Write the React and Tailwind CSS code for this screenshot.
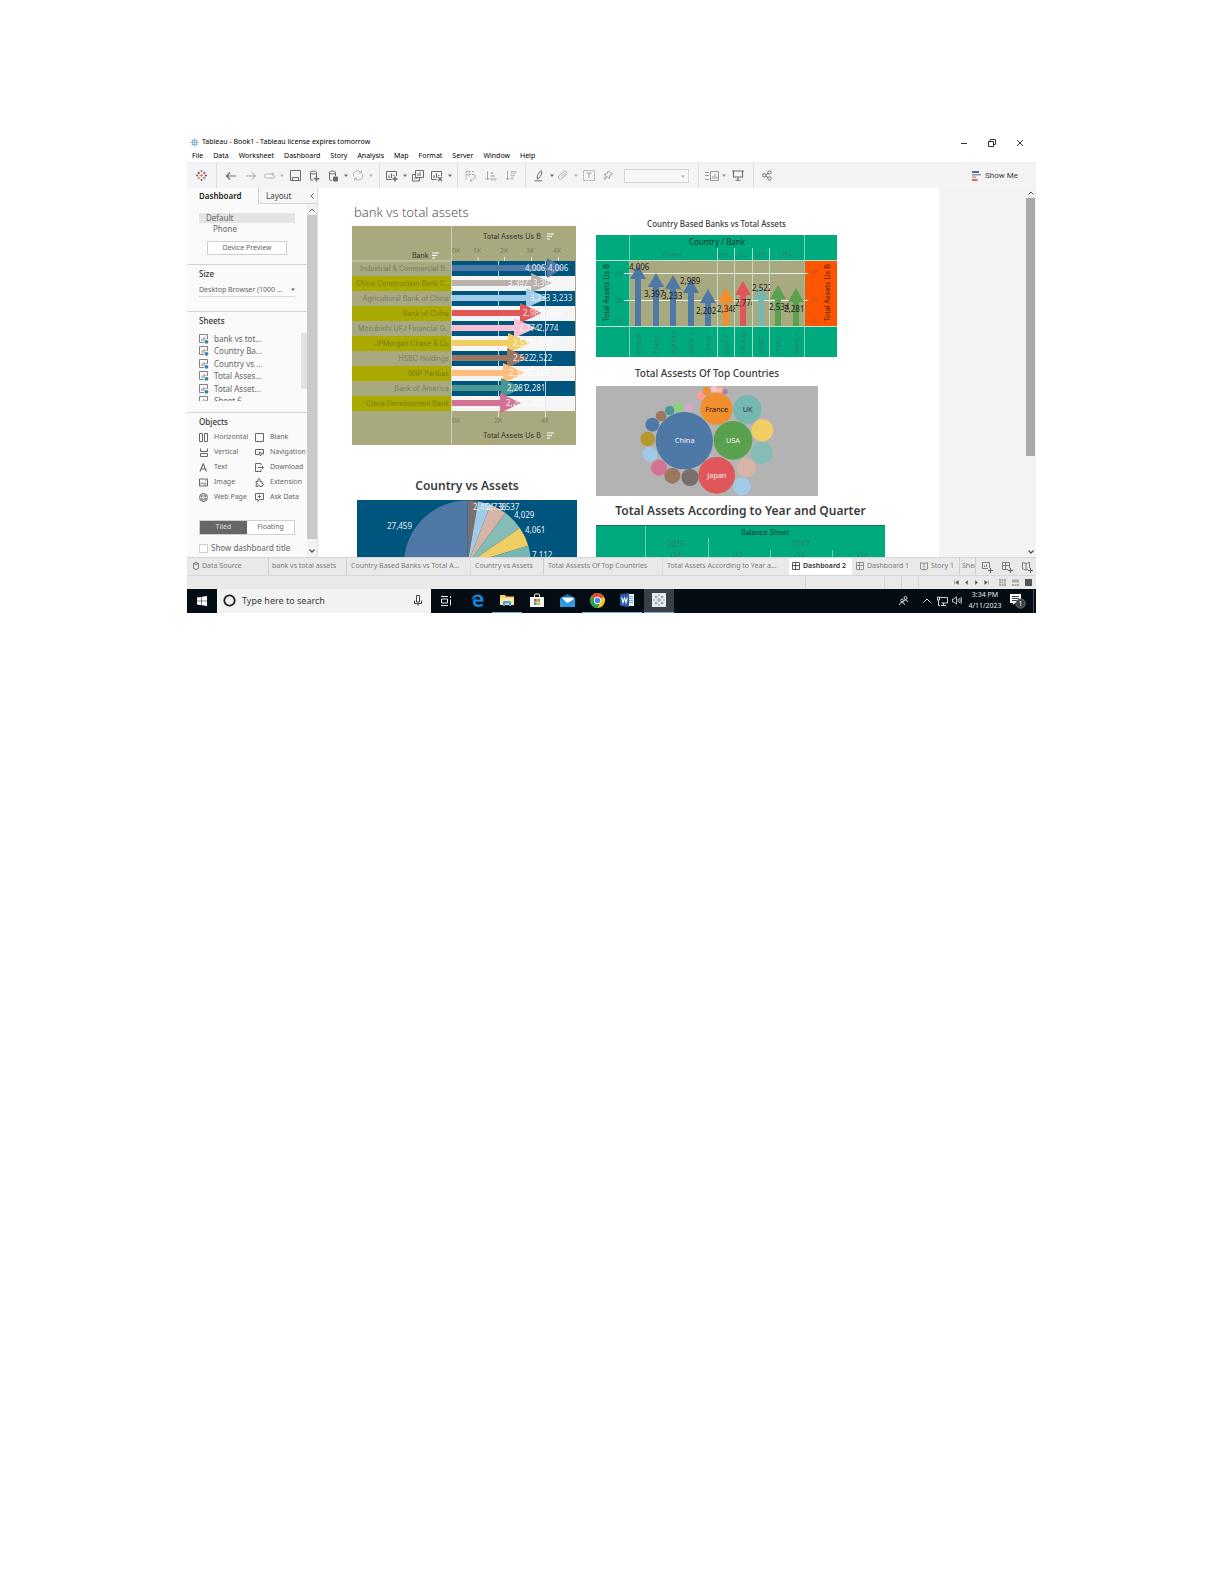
import React from "react";

const OLIVE = "#a9a97f";

function Svg({ w, h, children, className = "", ...rest }) {
  return (
    <svg width={w} height={h} viewBox={`0 0 ${w} ${h}`} fill="none" stroke="currentColor" className={`shrink-0 ${className}`} aria-hidden="true" {...rest}>
      {children}
    </svg>
  );
}

/* ---------- shared glyphs ---------- */
function TableauMark({ size = 10 }) {
  const c = ["#e8762c", "#c72037", "#5b6591", "#59879b"];
  return (
    <svg width={size} height={size} viewBox="0 0 20 20" fill="none" className="shrink-0" aria-hidden="true" strokeWidth="1.6">
      <path d="M10 7v6M7 10h6" stroke={c[0]} />
      <path d="M5 3v5M2.500 5.500h5" stroke={c[1]} />
      <path d="M15 3v5M12.500 5.500h5" stroke={c[2]} />
      <path d="M5 12v5M2.500 14.500h5" stroke={c[0]} />
      <path d="M15 12v5M12.500 14.500h5" stroke={c[3]} />
      <path d="M10 0v4M8 2h4" stroke={c[3]} />
      <path d="M10 16v4M8 18h4" stroke={c[2]} />
      <path d="M2 8v4M0 10h4" stroke={c[2]} />
      <path d="M18 8v4M16 10h4" stroke={c[1]} />
    </svg>
  );
}
const Back = () => <Svg w={12} h={10} strokeWidth="1.2"><path d="M11 5H1.500M5 1.500L1.500 5L5 8.500" /></Svg>;
const Forward = () => <Svg w={12} h={10}><path d="M1 5h9.500M7 1.500L10.500 5L7 8.500" /></Svg>;
const Replay = () => <Svg w={12} h={10}><path d="M8 7H2.500Q.5 7 .5 5T2.500 3H9.500M8 1.500L10 3L8 4.500M10 4.500Q11.500 5 10.500 6.500L8 7" /></Svg>;
const Save = () => <Svg w={11} h={11}><path d="M.5.5h10v10H.5zM2.500 10.500V7.500h6v3" /></Svg>;
const Cylinder = ({ pause }) => (
  <Svg w={12} h={12}>
    <path d="M4 10.500Q1.500 10.500 1.500 9V2.500Q1.500 1 4.500 1T7.500 2.500V6M1.500 2.500Q1.500 4 4.500 4T7.500 2.500" />
    {pause ? <path d="M5.500 7h4v4h-4z" fill="currentColor" /> : <path d="M7.500 6v5.500M4.700 8.700h5.600" strokeWidth="1.4" />}
  </Svg>
);
const Refresh = () => <Svg w={12} h={11}><path d="M1.500 6.500A4.300 4.300 0 0 1 9 2.500M10.500 4.500A4.300 4.300 0 0 1 3 8.500M9.500.5V3H7M2.500 10.500V8H5" /></Svg>;
const SheetIcon = ({ mark }) => (
  <Svg w={12} h={12}>
    <path d="M5.500 9.500H.5v-8h10V6" />
    <path d="M3 8V5.500M5.500 8V3.500M7.800 6V5" strokeWidth="1.200" />
    {mark === "plus" ? <path d="M9 6.500v5M6.500 9h5" strokeWidth="1.500" /> : <path d="M7 7l4 4M11 7l-4 4" strokeWidth="1.300" />}
  </Svg>
);
const Duplicate = () => <Svg w={12} h={12}><path d="M3.500.5h8v7h-8zM7.500 7.500v3.500h-7v-6.500h3M6 6V3.500M8 6V2M3 9V7.500M5 9V7.500" /></Svg>;
const Swap = () => <Svg w={12} h={12}><path d="M1 1.500h9M1 1.500v8M1 4.500h9M4 1.500v5M10 4.500v3M5 10.500Q10 10.500 10 7M8.500 8L10 6.500L11.500 8M6.500 9L5 10.500L6.500 12" strokeDasharray="2 1" /></Svg>;
const SortIcon = ({ up }) => (
  <Svg w={12} h={10}>
    <path d="M2.500 0v9M.5 7l2 2l2-2" />
    {up ? <path d="M6 1.500h2v1H6zM6 4.500h3.500v1H6zM6 7.500h5v1.500H6z" strokeWidth=".7" /> : <path d="M6 .5h5v1.500H6zM6 4h3.500v1H6zM6 7h2v1H6z" strokeWidth=".7" />}
  </Svg>
);
const Pen = () => <Svg w={12} h={12}><path d="M3 8.500L3.500 5.500Q5.500 1 7 .8T7.500 4Q6.500 7 5 8.200z" /><path d="M.5 10.800h7.500" strokeWidth="1" /></Svg>;
const Clip = () => <Svg w={12} h={11}><path d="M2 8.500Q.5 7 2 5.500L6.500 1.500Q8.500.5 9.500 2T8.500 5L4.500 9Q3 9.500 2 8.500M4 6.500L7.500 3.500M5 8L9 4" /></Svg>;
const TextBox = () => <Svg w={12} h={11}><path d="M.5.5h11v10H.5z" strokeDasharray="2 1" /><path d="M3.500 3h5M6 3v5" /></Svg>;
const Pin = () => <Svg w={12} h={11}><path d="M6 .8L10.500 4L8 5L7.500 8.500L5.500 6.800L2 9.800L4.200 6L2 4.500L5.500 3.500z" /></Svg>;
const Fit = () => <Svg w={14} h={10}><path d="M0 1.500h4M0 4.500h4M0 8.500h4M5.500.5h8v9h-8zM8 8V5M10 8V3M12 8V5.500" /></Svg>;
const Present = () => <Svg w={12} h={11}><path d="M0 1h12M1.500 1v6h9V1M6 7v3M3.500 10.300h5" strokeWidth="1.100" /></Svg>;
const Share = () => <Svg w={10} h={11}><circle cx="2.300" cy="5.300" r="1.700" /><circle cx="7.500" cy="2.500" r="1.700" /><circle cx="7.500" cy="8.500" r="1.700" /><path d="M4 4.500l2-1M4 6.300l2 1.300" /></Svg>;
const Caret = () => <svg width="4" height="3" viewBox="0 0 4 3" fill="currentColor" className="shrink-0" aria-hidden="true"><path d="M0 .5h4L2 3z" /></svg>;
const Grid = () => <Svg w={8} h={8} strokeWidth=".8"><path d="M.5.5h7v7h-7zM.5 3.500h7M3.500.5v7" /></Svg>;
const Book = () => <Svg w={8} h={9} strokeWidth=".8"><path d="M4 1.500L.5.500V7L4 8L7.500 7V.500L4 1.500V8" /></Svg>;

/* ---------- title, menu, toolbar ---------- */
const menus = ["File", "Data", "Worksheet", "Dashboard", "Story", "Analysis", "Map", "Format", "Server", "Window", "Help"];

function TitleBar() {
  return (
    <header className="bg-white text-[7px] text-black">
      <div className="flex h-[13px] items-center pl-[3px] font-['Noto_Sans',sans-serif]">
        <svg width="9" height="9" viewBox="0 0 9 9" fill="none" stroke="#5b9bb8" className="mr-[3px] shrink-0" aria-hidden="true">
          <path d="M4.500 0v9M0 4.500h9M2.500 1.500v6M6.500 1.500v6M1.500 2.500h6M1.500 6.500h6" strokeWidth=".6" />
        </svg>
        <h1 className="whitespace-nowrap">Tableau - Book1 - Tableau license expires tomorrow</h1>
        <div className="ml-auto flex pr-[2px]">
          <button aria-label="Minimize" className="flex h-[13px] w-7 items-center justify-center"><Svg w={8} h={8}><path d="M1 4.500h6" strokeWidth=".8" /></Svg></button>
          <button aria-label="Restore" className="flex h-[13px] w-7 items-center justify-center"><Svg w={8} h={8} strokeWidth=".8"><path d="M.5 2.500h5v5h-5zM2 2.500V1q0-.5.5-.5H7q.5 0 .5.5v4q0 .5-.5.5H5.500" /></Svg></button>
          <button aria-label="Close" className="flex h-[13px] w-7 items-center justify-center"><Svg w={8} h={8} strokeWidth=".8"><path d="M1 1l6 6M7 1L1 7" /></Svg></button>
        </div>
      </div>
      <nav className="flex h-[13px] items-center gap-[10px] pl-[5px] pt-px font-['Noto_Sans',sans-serif]">
        {menus.map((m) => <button key={m} className="leading-[10px]">{m}</button>)}
      </nav>
    </header>
  );
}

const Rule = ({ className = "" }) => <span className={`w-px self-stretch bg-[#dcdcdc] ${className}`} />;
function Tool({ label, className = "", children }) {
  return <button aria-label={label} title={label} className={`flex h-5 shrink-0 items-center justify-center ${className}`}>{children}</button>;
}

function Toolbar() {
  return (
    <div className="flex h-[26px] items-center border-t border-[#ebebeb] bg-[#f4f4f4] text-[#6a6a6a]">
      <Tool label="Start page" className="w-[29px]"><TableauMark size={11} /></Tool>
      <Rule className="mr-1" />
      <Tool label="Undo" className="w-5"><Back /></Tool>
      <Tool label="Redo" className="w-5 text-[#a5a5a5]"><Forward /></Tool>
      <Tool label="Replay" className="w-[18px] text-[#b5b5b5]"><Replay /></Tool>
      <Tool label="Replay options" className="w-[6px] text-[#b5b5b5]"><Caret /></Tool>
      <Tool label="Save" className="w-5"><Save /></Tool>
      <Tool label="New data source" className="w-5"><Cylinder /></Tool>
      <Tool label="Pause updates" className="w-[18px]"><Cylinder pause /></Tool>
      <Tool label="Pause options" className="w-[6px]"><Caret /></Tool>
      <Tool label="Run update" className="w-[18px] text-[#b5b5b5]"><Refresh /></Tool>
      <Tool label="Update options" className="mr-1 w-2 text-[#b5b5b5]"><Caret /></Tool>
      <Rule className="mr-[2px]" />
      <Tool label="New worksheet" className="w-5"><SheetIcon mark="plus" /></Tool>
      <Tool label="New options" className="w-[6px]"><Caret /></Tool>
      <Tool label="Duplicate" className="w-5"><Duplicate /></Tool>
      <Tool label="Clear sheet" className="w-[18px]"><SheetIcon mark="x" /></Tool>
      <Tool label="Clear options" className="mr-1 w-[7px]"><Caret /></Tool>
      <Rule className="mr-[3px]" />
      <Tool label="Swap" className="w-5 text-[#acacac]"><Swap /></Tool>
      <Tool label="Sort ascending" className="w-5 text-[#acacac]"><SortIcon up /></Tool>
      <Tool label="Sort descending" className="mr-1 w-5 text-[#acacac]"><SortIcon /></Tool>
      <Rule className="mr-[5px]" />
      <Tool label="Highlight" className="w-[18px]"><Pen /></Tool>
      <Tool label="Highlight options" className="w-[5px]"><Caret /></Tool>
      <Tool label="Group" className="w-[18px] text-[#b5b5b5]"><Clip /></Tool>
      <Tool label="Group options" className="w-[7px] text-[#b5b5b5]"><Caret /></Tool>
      <Tool label="Labels" className="w-5 text-[#a5a5a5]"><TextBox /></Tool>
      <Tool label="Pin" className="w-[18px] text-[#a5a5a5]"><Pin /></Tool>
      <div className="relative ml-[7px] mr-[9px] h-[14px] w-[65px]">
        <select aria-label="Fit size" className="h-full w-full appearance-none border border-[#d4d4d4] bg-[#f7f7f7]" />
        <span className="pointer-events-none absolute right-1 top-[6px] text-[#b5b5b5]"><Caret /></span>
      </div>
      <Rule className="mr-1" />
      <Tool label="Show cards" className="w-[18px] text-[#9a9a9a]"><Fit /></Tool>
      <Tool label="Card options" className="w-[6px] text-[#9a9a9a]"><Caret /></Tool>
      <Tool label="Presentation mode" className="mr-1 w-[22px]"><Present /></Tool>
      <Rule className="mr-1" />
      <Tool label="Share" className="w-[18px]"><Share /></Tool>
      <button className="ml-auto mr-[18px] flex items-center gap-1 font-['Roboto',sans-serif] text-[8px] text-[#3c3c3c]">
        <svg width="9" height="10" viewBox="0 0 9 10" aria-hidden="true">
          <path d="M0 0h7v2H0z" fill="#5b6591" /><path d="M0 3h9v1.500H0z" fill="#8596b8" /><path d="M0 5.500h4v1.500H0z" fill="#b99a9a" /><path d="M0 8h5.500v2H0z" fill="#e0605f" />
        </svg>
        Show Me
      </button>
    </div>
  );
}

/* ---------- sidebar ---------- */
const sheets = ["bank vs tot...", "Country Ba...", "Country vs ...", "Total Asses...", "Total Asset...", "Sheet 6"];
const objects = [
  ["Horizontal", <Svg w={9} h={9} key="i"><path d="M.5.500h3v8h-3zM5.500.500h3v8h-3z" /></Svg>],
  ["Blank", <Svg w={9} h={9} key="i"><path d="M.5.500h8v8h-8z" /></Svg>],
  ["Vertical", <Svg w={9} h={9} key="i"><path d="M1.500.500v3h7v-3M1.500 8.500v-3h7v3z" /></Svg>],
  ["Navigation", <Svg w={9} h={9} key="i"><path d="M4 6.500H.5v-5h8v5M4 4l3.500 1.500L6 6.500L5.500 8z" /></Svg>],
  ["Text", <Svg w={9} h={9} key="i"><path d="M1 8.500L4.200.800L7.500 8.500M2.300 6h4" strokeWidth="1.100" /></Svg>],
  ["Download", <Svg w={9} h={9} key="i"><path d="M6 2.500V.500H.5v8H6v-2M3 4.500h5.500M7 3l1.500 1.500L7 6" /></Svg>],
  ["Image", <Svg w={9} h={9} key="i"><path d="M.5 1h8v7h-8zM1 6.500l2-2l1.500 1.500h3M6 3h1" /></Svg>],
  ["Extension", <Svg w={9} h={9} key="i"><path d="M1 3.500h2Q2.500.500 4 .500T5 3.500h2v2q1.500 0 1.500 1T7 7.500v1H5Q5 7 4 7T3 8.500H1v-2q1.500 0 1.500-.8T1 5z" /></Svg>],
  ["Web Page", <Svg w={9} h={9} key="i" strokeWidth=".8"><circle cx="4.500" cy="4.500" r="4" /><ellipse cx="4.500" cy="4.500" rx="1.800" ry="4" /><path d="M.5 3h8M.5 6h8" /></Svg>],
  ["Ask Data", <Svg w={9} h={9} key="i"><path d="M.5.500h8v6H4.500L3 8.500V6.500H.5zM4.500 1.800v3.200M3 3.500h3" /></Svg>],
];

function Sidebar() {
  return (
    <aside className="flex w-[131px] shrink-0 flex-col border-r border-[#dedede] bg-[#fafafa] font-['Noto_Sans',sans-serif] text-[8px] leading-[10px] text-[#666]">
      <div className="flex h-4 items-stretch">
        <button className="w-[71px] pl-3 text-left font-semibold text-[#222]">Dashboard</button>
        <button className="w-[49px] border-b border-l border-[#d4d4d4] bg-[#f6f6f6] pl-[7px] text-left text-[#444]">Layout</button>
        <button aria-label="Collapse" className="flex flex-1 items-center justify-center border-b border-[#d4d4d4] bg-[#f6f6f6]"><Svg w={4} h={6}><path d="M3.500.500L1 3l2.500 2.500" /></Svg></button>
      </div>
      <div className="flex flex-1">
        <div className="flex-1">
          <section className="border-b border-[#d4d4d4] pb-[9px] pl-3 pr-3 pt-[9px]">
            <button className="block w-full bg-[#e4e4e4] pl-[7px] text-left">Default</button>
            <button className="mt-px block pl-[14px]">Phone</button>
            <button className="ml-2 mt-[7px] block h-[14px] w-20 border border-[#cfcfcf] bg-white text-[7px]">Device Preview</button>
          </section>
          <section className="border-b border-[#d4d4d4] pb-[14px] pl-3 pr-3 pt-1">
            <h2 className="font-medium text-[#333]"><label htmlFor="size">Size</label></h2>
            <div className="relative mt-[5px]">
              <select id="size" className="h-3 w-full appearance-none border-b border-[#dcdcdc] bg-transparent text-[7px] leading-[10px]">
                <option>Desktop Browser (1000 ...</option>
              </select>
              <span className="pointer-events-none absolute right-0 top-1"><Caret /></span>
            </div>
          </section>
          <section className="border-b border-[#d4d4d4] pb-[11px] pl-3 pt-1">
            <h2 className="font-medium text-[#333]">Sheets</h2>
            <div className="mt-[7px] flex h-[68px] justify-between overflow-hidden">
              <ul className="grid h-[75px] grid-rows-6">
                {sheets.map((s) => (
                  <li key={s} className="flex items-center gap-[5px]">
                    <Svg w={10} h={10}><path d="M5 8.500H.5v-8h8V5M3 7V4.500M5 7V3M6.800 5V4" strokeWidth=".8" /><circle cx="7.500" cy="7.800" r="1.900" fill="#3c7fa6" stroke="none" /></Svg>
                    {s}
                  </li>
                ))}
              </ul>
              <span className="h-14 w-[6px] bg-[#e2e2e2]" />
            </div>
          </section>
          <section className="pl-3 pt-1">
            <h2 className="font-medium text-[#333]">Objects</h2>
            <div className="mt-[3px] grid grid-cols-[56px_1fr]">
              {objects.map(([name, icon]) => (
                <button key={name} className="flex h-[15px] items-center gap-[6px] text-[7px]">{icon}{name}</button>
              ))}
            </div>
            <div className="mr-3 mt-[15px] flex h-[15px] border border-[#cfcfcf] text-[7px]">
              <button className="flex-1 bg-[#666] text-[#ddd]">Tiled</button>
              <button className="flex-1 bg-white">Floating</button>
            </div>
            <label className="mb-[3px] mt-2 flex h-[11px] items-center gap-[3px] whitespace-nowrap">
              <input type="checkbox" className="h-[9px] w-[9px] appearance-none border border-[#cfcfcf] bg-white" />
              Show dashboard title
            </label>
          </section>
        </div>
        <div className="flex w-[10px] flex-col items-center bg-[#f2f2f2] text-[#555]">
          <span className="flex h-[11px] items-center"><Svg w={6} h={4}><path d="M.5 3.500L3 1l2.500 2.500" /></Svg></span>
          <span className="w-full flex-1 bg-[#cacaca]" />
          <span className="flex h-[18px] items-end pb-1"><Svg w={6} h={4}><path d="M.5.500L3 3L5.500.500" strokeWidth="1.300" /></Svg></span>
        </div>
      </div>
    </aside>
  );
}

/* ---------- charts ---------- */
const chartFont = "font-['Noto_Sans',sans-serif]";
const SortGlyph = ({ x, y }) => <path d={`M${x} ${y}h7M${x} ${y + 2.5}h5M${x} ${y + 5}h3`} stroke="#fff" strokeWidth="1.200" />;

const banks = [
  ["Industrial & Commercial B..", "4,006", "#4e79a7", 195, 212, 173, 196],
  ["China Construction Bank C..", "3,397", "#bab0ac", 179, 200, 156, 181],
  ["Agricultural Bank of China", "3,233", "#a0cbe8", 174, 196, 178, 200],
  ["Bank of China", "2,989", "#e15759", 168, 190, 171, 189],
  ["Mitsubishi UFJ Financial G..", "2,774", "#fabfd2", 162, 184, 167, 186],
  ["JPMorgan Chase & Co", "2,534", "#f1ce63", 156, 178, 161, 180],
  ["HSBC Holdings", "2,522", "#9d7660", 155, 176, 161, 180],
  ["BNP Paribas", "2,348", "#ffbe7d", 151, 173, 157, 176],
  ["Bank of America", "2,281", "#499894", 149, 170, 155, 173],
  ["China Development Bank", "2,202", "#d37295", 148, 169, 154, 172],
];

function BankChart() {
  return (
    <svg width="224" height="219" viewBox="0 0 224 219" className={chartFont} role="img" aria-label="bank vs total assets" fontSize="7">
      <rect width="224" height="219" fill={OLIVE} />
      <path d="M0 .5h224M0 218.500h224" stroke="#c79a6c" />
      {banks.map((b, i) => (
        <g key={b[0]}>
          {i % 2 === 1 && <rect x="0" y={35 + i * 15} width="99" height="15" fill="#a9a900" />}
          <rect x="99" y={35 + i * 15} width="124" height="15" fill={i % 2 ? "#f5f5f5" : "#00557f"} />
          <text x="97" y={45 + i * 15} textAnchor="end" className="font-['Inter',sans-serif]" fill={i % 2 ? "#7d7d1c" : "#7b7b66"}>{b[0]}</text>
        </g>
      ))}
      <path d="M146.500 35v153M193.500 35v153" stroke="#e6ecef" strokeWidth=".8" />
      {banks.map((b, i) => {
        const y = 42 + i * 15;
        return <path key={b[0]} d={`M99 ${y - 3}H${b[3]}V${y - 10}L${b[4]} ${y}L${b[3]} ${y + 10}V${y + 3}H99z`} fill={b[2]} />;
      })}
      <g fill="#fff" fontSize="8">
        {banks.map((b, i) => (
          <g key={b[0]}>
            <text x={b[5]} y={45 + i * 15} fillOpacity=".9">{b[1]}</text>
            <text x={b[6]} y={45 + i * 15} fillOpacity=".9">{b[1]}</text>
          </g>
        ))}
      </g>
      <path d="M99.500 0v219M0 35h99" stroke="#d9d9c4" strokeWidth=".8" />
      <path d="M126 31v4M152.500 31v4M179.500 31v4M206.500 31v4M146.500 188v3M193.500 188v3" stroke="#e6e6d8" />
      <g fill="#7b7b60">
        <text x="100" y="27">0K</text><text x="121" y="27">1K</text><text x="148" y="27">2K</text><text x="174" y="27">3K</text><text x="201" y="27">4K</text>
        <text x="100" y="197">0K</text><text x="142" y="197">2K</text><text x="189" y="197">4K</text>
      </g>
      <g fill="#33332a" className="font-['Inter',sans-serif]">
        <text x="131" y="13">Total Assets Us B</text>
        <text x="60" y="32">Bank</text>
        <text x="131" y="212">Total Assets Us B</text>
      </g>
      <SortGlyph x={195} y={8} /><SortGlyph x={80} y={27} /><SortGlyph x={195} y={207} />
    </svg>
  );
}

const slices = [
  [0, 9.7, "#79706e"], [9.7, 21.3, "#a0cbe8"], [21.3, 36.7, "#d7b5a6"], [36.7, 55.5, "#86bcb6"],
  [55.5, 73.3, "#f1ce63"], [73.3, 100, "#76b7b2"], [100, 190, "#59a14f"], [190, 360, "#4e79a7"],
];
function PieChart() {
  const cx = 110.5, cy = 64, r = 63.5;
  const pt = (a) => `${cx + r * Math.sin((a * Math.PI) / 180)} ${cy - r * Math.cos((a * Math.PI) / 180)}`;
  return (
    <svg width="220" height="140" viewBox="0 0 220 140" className={chartFont} role="img" aria-label="Country vs Assets" fontSize="8">
      <rect width="220" height="140" fill="#00557f" />
      {slices.map(([a, b, c]) => <path key={a} d={`M${cx} ${cy}L${pt(a)}A${r} ${r} 0 0 1 ${pt(b)}z`} fill={c} />)}
      <g fill="#e8eef2">
        <text x="30" y="29">27,459</text><text x="116" y="10">2,454</text><text x="129" y="10">2,738</text><text x="142" y="10">3,537</text>
        <text x="157" y="18">4,029</text><text x="168" y="33">4,061</text><text x="175" y="58">7,112</text>
      </g>
    </svg>
  );
}

const arrows = [
  [42, 30, "#4e79a7", "4,006", 33, 34, "Indust"], [60, 38, "#4e79a7", "3,397", 48, 61, "China"], [77, 40, "#4e79a7", "3,233", 66, 63, "Agricul"],
  [95, 44, "#4e79a7", "2,989", 84, 48, "Bank o"], [112, 54, "#4e79a7", "2,202", 100, 78, "China"], [130, 53, "#f28e2b", "2,348", 121, 76, "BNP P"],
  [147, 46, "#e15759", "2,774", 139, 70, "Mitsub"], [165, 51, "#76b7b2", "2,522", 156, 55, "HSBC"], [182, 50, "#59a14f", "2,534", 173, 74, "JPMor"], [200, 53, "#59a14f", "2,281", 188, 76, "Bank o"],
];
function ArrowChart() {
  return (
    <svg width="241" height="122" viewBox="0 0 241 122" className={chartFont} role="img" aria-label="Country Based Banks vs Total Assets" fontSize="7">
      <defs>
        {arrows.slice(5, 8).map(([x]) => <clipPath id={`pane${x}`} key={x}><rect x={x - 9} y="25" width="18" height="67" /></clipPath>)}
      </defs>
      <rect width="241" height="122" fill="#00aa7f" />
      <rect x="33.500" y="25.500" width="175" height="66" fill={OLIVE} />
      <rect x="208.500" y="25.500" width="32.500" height="66" fill="#ff5500" />
      <path d="M28 38.500h184M28 65.500h184" stroke="#eeeee2" />
      {arrows.map(([x, y, c]) => <path key={x} d={`M${x - 3} 91V${y + 14}H${x - 8}L${x} ${y}L${x + 8} ${y + 14}H${x + 3}V91z`} fill={c} />)}
      <path d="M0 25.500h241M0 91.500h241" stroke="#bfe3cf" />
      <path d="M33.500 0v122M208.500 0v122" stroke="#7fcfae" />
      <path d="M121.500 13v109M138.500 13v109M156.500 13v109M173.500 13v109" stroke="#d3e6d3" strokeWidth=".8" />
      <g fill="#1c1c1c" fontSize="8">
        {arrows.map(([x, , , v, lx, ly]) => <text key={x} x={lx} y={ly + 1} clipPath={x >= 130 && x <= 165 ? `url(#pane${x})` : undefined}>{v}</text>)}
      </g>
      <text x="121" y="10" fontSize="8" textAnchor="middle" fill="#14382d">Country / Bank</text>
      <g fill="#26866a">
        <text x="67" y="22">China</text><text x="122" y="22">Fra..</text><text x="142" y="22">Ja..</text><text x="160" y="22">UK</text><text x="183" y="22">USA</text>
        <text x="19" y="41">4K</text><text x="19" y="68">2K</text><text x="19" y="89">0K</text>
        {arrows.map(([x, , , , , , n]) => <text key={x} transform={`translate(${x + 3} 119) rotate(-90)`}>{n}</text>)}
      </g>
      <g fill="#c8551c"><text x="214" y="39">4K</text><text x="214" y="67">2K</text><text x="214" y="89">0K</text></g>
      <text transform="translate(13 58) rotate(-90)" textAnchor="middle" className="font-['Inter',sans-serif]" fill="#14382d">Total Assets Us B</text>
      <text transform="translate(234 58) rotate(-90)" textAnchor="middle" className="font-['Inter',sans-serif]" fill="#4a1e08">Total Assets Us B</text>
    </svg>
  );
}

const bubbles = [
  [297, 242, 86, "#4e79a7"], [443, 241, 58, "#59a14f"], [393, 146, 48, "#f28e2b"], [486, 148, 43, "#76b7b2"], [394, 346, 55, "#e15759"],
  [531, 211, 33, "#f1ce63"], [529, 279, 33, "#86bcb6"], [483, 323, 29, "#d7b5a6"], [470, 379, 27, "#a0cbe8"], [314, 352, 26, "#79706e"],
  [261, 347, 24, "#9d7660"], [221, 323, 24, "#d37295"], [194, 283, 22, "#a0cbe8"], [187, 237, 22, "#b6992d"], [201, 194, 21, "#4e79a7"],
  [227, 168, 16, "#9d7660"], [253, 152, 14, "#499894"], [281, 142, 15, "#8cd17d"], [310, 142, 14, "#d4a6c8"], [346, 107, 12, "#ff9d9a"],
  [364, 93, 12, "#f28e2b"], [386, 88, 10, "#fabfd2"], [404, 91, 9, "#ffbe7d"], [419, 95, 8, "#b07aa1"],
];
function BubbleChart() {
  return (
    <svg width="222" height="110" viewBox="32 78 666 330" className={chartFont} role="img" aria-label="Total Assests Of Top Countries" fontSize="22" textAnchor="middle">
      <rect x="31" y="78" width="668" height="330" fill="#b3b3b3" />
      {bubbles.map(([x, y, r, c]) => <circle key={`${x}-${y}`} cx={x} cy={y} r={r} fill={c} />)}
      <text x="394" y="155" fill="#222">France</text><text x="487" y="156" fill="#333">UK</text>
      <g fill="#eef2f6"><text x="298" y="250">China</text><text x="443" y="250">USA</text><text x="395" y="354">Japan</text></g>
    </svg>
  );
}

function YearChart() {
  return (
    <svg width="289" height="120" viewBox="0 0 289 120" className={chartFont} role="img" aria-label="Total Assets According to Year and Quarter" fontSize="7">
      <rect width="289" height="120" fill="#00aa7f" />
      <path d="M0 .5h289" stroke="#1d6e57" />
      <path d="M49.500 1v119M112.500 13v107M174.500 25v95M236.500 25v95" stroke="#6fcbab" />
      <text x="169" y="10" textAnchor="middle" className="font-['Inter',sans-serif]" fill="#14382d">Balance Sheet</text>
      <g fill="#2b8068" fontSize="8" textAnchor="middle">
        <text x="80" y="22">2016</text><text x="205" y="22">2017</text>
        <text x="80" y="34">Q4</text><text x="142" y="34">Q2</text><text x="204" y="34">Q3</text><text x="267" y="34">Q4</text>
      </g>
    </svg>
  );
}

function Canvas() {
  return (
    <main className="flex min-w-0 flex-1 overflow-hidden bg-[#f3f3f3] [contain:size]">
      <div className={`flex flex-1 items-start gap-[19px] overflow-hidden bg-white pl-[34px] text-[#3c3c3c] ${chartFont}`}>
        <div className="w-[225px] shrink-0 pt-[17px]">
          <h2 className="pl-[2px] text-[13px] font-light leading-[14px] text-[#555]">bank vs total assets</h2>
          <div className="mt-[7px]"><BankChart /></div>
          <h2 className="ml-[5px] mt-[33px] w-[220px] text-center text-[12px] font-semibold leading-4">Country vs Assets</h2>
          <div className="ml-[5px] mt-[6px]"><PieChart /></div>
        </div>
        <div className="flex shrink-0 flex-col items-start pt-[31px]">
          <div>
            <h2 className="text-center text-[8px] font-medium leading-[10px]">Country Based Banks vs Total Assets</h2>
            <div className="mt-[6px]"><ArrowChart /></div>
          </div>
          <div className="mt-[10px]">
            <h2 className="text-center text-[10px] font-medium leading-3">Total Assests Of Top Countries</h2>
            <div className="mt-[7px]"><BubbleChart /></div>
          </div>
          <div className="mt-[7px]">
            <h2 className="text-center text-[12px] font-semibold leading-4">Total Assets According to Year and Quarter</h2>
            <div className="mt-[6px]"><YearChart /></div>
          </div>
        </div>
      </div>
      <div className="ml-[87px] flex w-[10px] shrink-0 flex-col items-start text-[#555]">
        <span className="flex h-[10px] items-center pl-[2px]"><Svg w={6} h={4}><path d="M.5 3.500L3 1l2.500 2.500" /></Svg></span>
        <span className="h-[70%] w-[9px] bg-[#a8a8a8]" />
        <span className="mt-auto flex pb-[3px] pl-[2px]"><Svg w={6} h={4}><path d="M.5.500L3 3L5.500.500" strokeWidth="1.300" /></Svg></span>
      </div>
    </main>
  );
}

/* ---------- sheet tabs and status ---------- */
function Tab({ className = "", children }) {
  return <button className={`flex h-full shrink-0 items-center gap-[3px] overflow-hidden whitespace-nowrap pl-1 ${className}`}>{children}</button>;
}
const AddTab = ({ children, label }) => (
  <button aria-label={label} className="relative flex h-full flex-1 items-center justify-center">
    {children}
    <span className="absolute right-[3px] top-[10px] bg-[#e9e9e9]"><Svg w={5} h={5}><path d="M2.500 0v5M0 2.500h5" strokeWidth="1.200" /></Svg></span>
  </button>
);

function SheetTabs() {
  return (
    <nav className="flex h-[19px] items-center border-b border-t border-[#d6d6d6] bg-[#e9e9e9] font-['Noto_Sans',sans-serif] text-[7px] text-[#7c7c7c]">
      <Tab className="w-[82px] border-r border-[#d0d0d0] pl-[6px]"><Svg w={6} h={8}><path d="M.5 1.500Q3-.5 5.500 1.500V6.500Q3 8.500.5 6.500zM.5 1.500Q3 3.500 5.500 1.500" /></Svg>Data Source</Tab>
      <Tab className="w-[78px] border-r border-[#d0d0d0] pl-[3px]">bank vs total assets</Tab>
      <Tab className="w-[124px] border-r border-[#dedede]">Country Based Banks vs Total A...</Tab>
      <Tab className="w-[73px] border-r border-[#d0d0d0]">Country vs Assets</Tab>
      <Tab className="w-[119px] border-r border-[#dedede]">Total Assests Of Top Countries</Tab>
      <Tab className="w-[126px]">Total Assets According to Year a...</Tab>
      <Tab className="w-[63px] bg-white pl-[3px] font-semibold text-[#333]"><Grid />Dashboard 2</Tab>
      <Tab className="w-[64px]"><Grid />Dashboard 1</Tab>
      <Tab className="w-[44px] border-r border-[#d0d0d0]"><Book />Story 1</Tab>
      <Tab className="w-[16px] border-r border-[#d0d0d0] pl-[2px]">Sheet 6</Tab>
      <div className="flex h-full min-w-0 flex-1 text-[#666]">
        <AddTab label="New worksheet"><Svg w={8} h={8} strokeWidth=".8"><path d="M.5.500h7v6h-7zM2.500 5V3.500M4.500 5V2.500" /></Svg></AddTab>
        <AddTab label="New dashboard"><Grid /></AddTab>
        <AddTab label="New story"><Book /></AddTab>
      </div>
    </nav>
  );
}

function StatusBar() {
  const nav = ["M1 1v5M6 1L2.500 3.500L6 6z", "M5 1L2 3.500L5 6z", "M2 1l3 2.500L2 6z", "M1 1l3.500 2.500L1 6zM6 1v5"];
  return (
    <footer className="flex h-[13px] items-center justify-end bg-[#e9e9e9] text-[#555]">
      <span className="h-full w-[79px] border-l border-[#d8d8d8]" /><span className="h-full w-[17px] border-l border-[#d8d8d8]" /><span className="h-full w-[17px] border-l border-[#d8d8d8]" />
      <div className="flex h-full items-center border-l border-[#d8d8d8] pl-[32px]">
        {nav.map((d, i) => (
          <button key={d} aria-label={["First sheet", "Previous sheet", "Next sheet", "Last sheet"][i]} className="flex w-[10px] justify-center">
            <svg width="5" height="5" viewBox="0 0 7 7" stroke="currentColor" fill="currentColor"><path d={d} strokeWidth=".8" /></svg>
          </button>
        ))}
        <div className="ml-2 flex gap-[6px] pr-1">
          <button aria-label="Show tabs"><Svg w={7} h={7} className="text-[#aaa]"><path d="M0 1h7M0 3.500h7M0 6h7" strokeWidth="2" strokeDasharray="2 .5" /></Svg></button>
          <button aria-label="Show filmstrip"><Svg w={7} h={7} className="text-[#aaa]"><path d="M0 2h7" strokeWidth="3" /><path d="M0 6h7" strokeWidth="2" strokeDasharray="2 .5" /></Svg></button>
          <button aria-label="Show sheet sorter"><Svg w={7} h={7}><path d="M0 3.500h7" strokeWidth="7" /></Svg></button>
        </div>
      </div>
    </footer>
  );
}

/* ---------- taskbar ---------- */
function TaskApp({ label, open, active, children }) {
  return (
    <button aria-label={label} className={`flex h-full w-[30px] shrink-0 items-center justify-center border-b ${open ? "border-[#7fb2dd]" : "border-transparent"} ${active ? "ml-[2px] bg-[#3a4048]" : ""}`}>
      {children}
    </button>
  );
}

function Taskbar() {
  return (
    <div className="flex h-6 items-center bg-[#040c14] font-['Noto_Sans',sans-serif] text-[#e8e8e8]">
      <button aria-label="Start" className="flex h-full w-[30px] shrink-0 items-center justify-center">
        <svg width="10" height="10" viewBox="0 0 10 10" fill="#fff"><path d="M0 1.500l4.500-.6v3.900H0zM5 .8L10 0v4.800H5zM0 5.300h4.500v3.900L0 8.600zM5 5.300h5V10L5 9.300z" /></svg>
      </button>
      <label className="flex h-full w-[214px] shrink-0 items-center bg-[#f2f2f2] pl-[6px] text-[#222]">
        <Svg w={13} h={13}><circle cx="6.500" cy="6.500" r="5.200" strokeWidth="1.800" /></Svg>
        <input type="text" aria-label="Search" placeholder="Type here to search" className="ml-[6px] min-w-0 flex-1 bg-transparent text-[9px] placeholder:text-[#3c3c3c]" />
        <Svg w={8} h={11} className="mr-[9px]" strokeWidth=".8"><path d="M2.500.500h3v6.500h-3zM.5 5.500V8.500h7v-3M4 8.500V11" /></Svg>
      </label>
      <button aria-label="Task view" className="flex h-full w-[30px] shrink-0 items-center justify-center"><Svg w={11} h={10}><path d="M.5 3h6v4h-6zM0 .5h7M0 9.500h7M9.500 0v2M9.500 3.500v6" /></Svg></button>
      <span className="w-px shrink-0" />
      <TaskApp label="Edge"><svg width="13" height="13" viewBox="0 0 13 13"><path d="M.5 6.500C1 2.500 3.500.500 6.800.500C10.500.500 12.500 3 12.500 6.200V7.800H4.500C4.600 10 6.300 10.600 8 10.600C9.500 10.600 10.800 10.200 11.800 9.600V12C10.500 12.700 9 13 7.500 13C4 13 1.800 11 1.800 8C1.800 5.500 3.300 4 5.200 3.300C4.700 4 4.500 4.800 4.500 5.500H9C9 3.800 8.200 2.800 6.500 2.800C4 2.800 2 4.300.5 6.500z" fill="#1684d8" /></svg></TaskApp>
      <TaskApp label="File Explorer" open><svg width="14" height="12" viewBox="0 0 14 12"><path d="M0 1h5l1 1.500h8V11H0z" fill="#f5cf6a" /><path d="M0 4h14v7H0z" fill="#fbe3a0" /><path d="M3 12V8q0-1 1-1h6q1 0 1 1v4H9V9.500H5V12z" fill="#4aa3df" /></svg></TaskApp>
      <TaskApp label="Store"><svg width="14" height="14" viewBox="0 0 14 14"><path d="M4.500 4V2q0-1 1-1h3q1 0 1 1v2" fill="none" stroke="#fff" /><path d="M0 4h14v10H0z" fill="#f4f4f4" /><path d="M4 6h2.700v2.700H4z" fill="#e2502b" /><path d="M7.300 6H10v2.700H7.300z" fill="#7ab32e" /><path d="M4 9.300h2.700V12H4z" fill="#2a9fdc" /><path d="M7.300 9.300H10V12H7.300z" fill="#f3b41b" /></svg></TaskApp>
      <TaskApp label="Mail"><svg width="15" height="13" viewBox="0 0 15 13"><path d="M0 4L7.500 0L15 4v9H0z" fill="#1272b8" /><path d="M1.500 3.500h12V8L7.500 10z" fill="#fff" /><path d="M0 4.500L7.500 9L15 4.500V13H0z" fill="#2f9be2" /></svg></TaskApp>
      <TaskApp label="Chrome" open><svg width="15" height="15" viewBox="0 0 16 16"><circle cx="8" cy="8" r="8" fill="#f9c922" /><path d="M8 8L1.070 4A8 8 0 0 1 14.930 4z" fill="#dd4b39" /><path d="M8 8L1.070 4A8 8 0 0 0 8 16L11.500 9.500z" fill="#2f9e4f" /><path d="M8 4.300h7.100L14.500 3.300H8z" fill="#dd4b39" /><circle cx="8" cy="8" r="3.900" fill="#fff" /><circle cx="8" cy="8" r="3" fill="#4a86e8" /></svg></TaskApp>
      <TaskApp label="Word" open><svg width="14" height="14" viewBox="0 0 14 14"><path d="M6 1h8v12H6z" fill="#f2f6fb" /><path d="M8 3.500h5M8 5.500h5M8 7.500h5M8 9.500h5" stroke="#4a7fc4" strokeWidth=".7" /><path d="M0 1.300L9 0v14L0 12.700z" fill="#2a5caa" /><path d="M1.700 4.500L3 9.500L4.500 5L6 9.500L7.300 4.500" fill="none" stroke="#fff" strokeWidth="1.100" /></svg></TaskApp>
      <TaskApp label="Tableau" open active><span className="flex h-[14px] w-[14px] items-center justify-center bg-[#e9eef2]"><svg width="12" height="12" viewBox="0 0 12 12" stroke="#60788c" fill="none"><path d="M6 4v4M4 6h4M3 1.500v3M1.500 3h3M9 1.500v3M7.500 3h3M3 7.500v3M1.500 9h3M9 7.500v3M7.500 9h3M6 0v2M6 10v2M0 6h2M10 6h2" strokeWidth=".7" /></svg></span></TaskApp>
      <div className="ml-auto flex h-full items-center">
        <button aria-label="People" className="mr-[15px]"><Svg w={9} h={9} strokeWidth=".9"><circle cx="6.500" cy="2" r="1.500" /><path d="M4.500 6Q4.500 4 6.500 4T8.500 6" /><circle cx="3" cy="4.500" r="1.300" /><path d="M.5 9Q.5 6.500 3 6.500T5.500 9" /></Svg></button>
        <button aria-label="Hidden icons" className="mr-[6px]"><Svg w={8} h={5}><path d="M.5 4.500L4 1l3.500 3.500" /></Svg></button>
        <button aria-label="Network" className="mr-1"><Svg w={11} h={10} strokeWidth=".9"><path d="M2.500 1.500h8v5.500h-6M4 9.500h5M6.500 7v2.500M.5 1h2v3h-2zM1.500 4v5.500H3" /></Svg></button>
        <button aria-label="Volume" className="mr-[6px]"><Svg w={10} h={9}><path d="M.5 3h1.500L4.500.800v7.400L2 6H.5zM6 3q1 1.500 0 3M7.500 2q1.500 2.500 0 5M9 1q1.300 3.500 0 7" strokeWidth=".8" /></Svg></button>
        <div className="w-[34px] pb-px text-center text-[7px] leading-[11px]"><div>3:34 PM</div><div>4/11/2023</div></div>
        <button aria-label="Notifications" className="ml-[8px] mr-[7px]">
          <svg width="16" height="16" viewBox="0 0 16 16"><path d="M0 1h11v9H5L3 12V10H0z" fill="#fff" /><path d="M2 3.500h7M2 5.500h7M2 7.500h5" stroke="#0a121a" strokeWidth=".8" /><circle cx="10.500" cy="10.500" r="4.700" fill="#3b4046" stroke="#8a8f94" strokeWidth=".7" /><text x="10.500" y="13" fontSize="7" textAnchor="middle" fill="#fff">1</text></svg>
        </button>
        <span className="mr-[2px] h-full w-px bg-[#4a4f55]" />
      </div>
    </div>
  );
}

export default function App() {
  return (
    <div className="min-h-screen bg-white pl-[187px] pr-[188px] pt-[136px]">
      <div className="flex flex-col">
        <TitleBar />
        <Toolbar />
        <div className="flex items-stretch">
          <Sidebar />
          <Canvas />
        </div>
        <SheetTabs />
        <StatusBar />
        <Taskbar />
      </div>
    </div>
  );
}
